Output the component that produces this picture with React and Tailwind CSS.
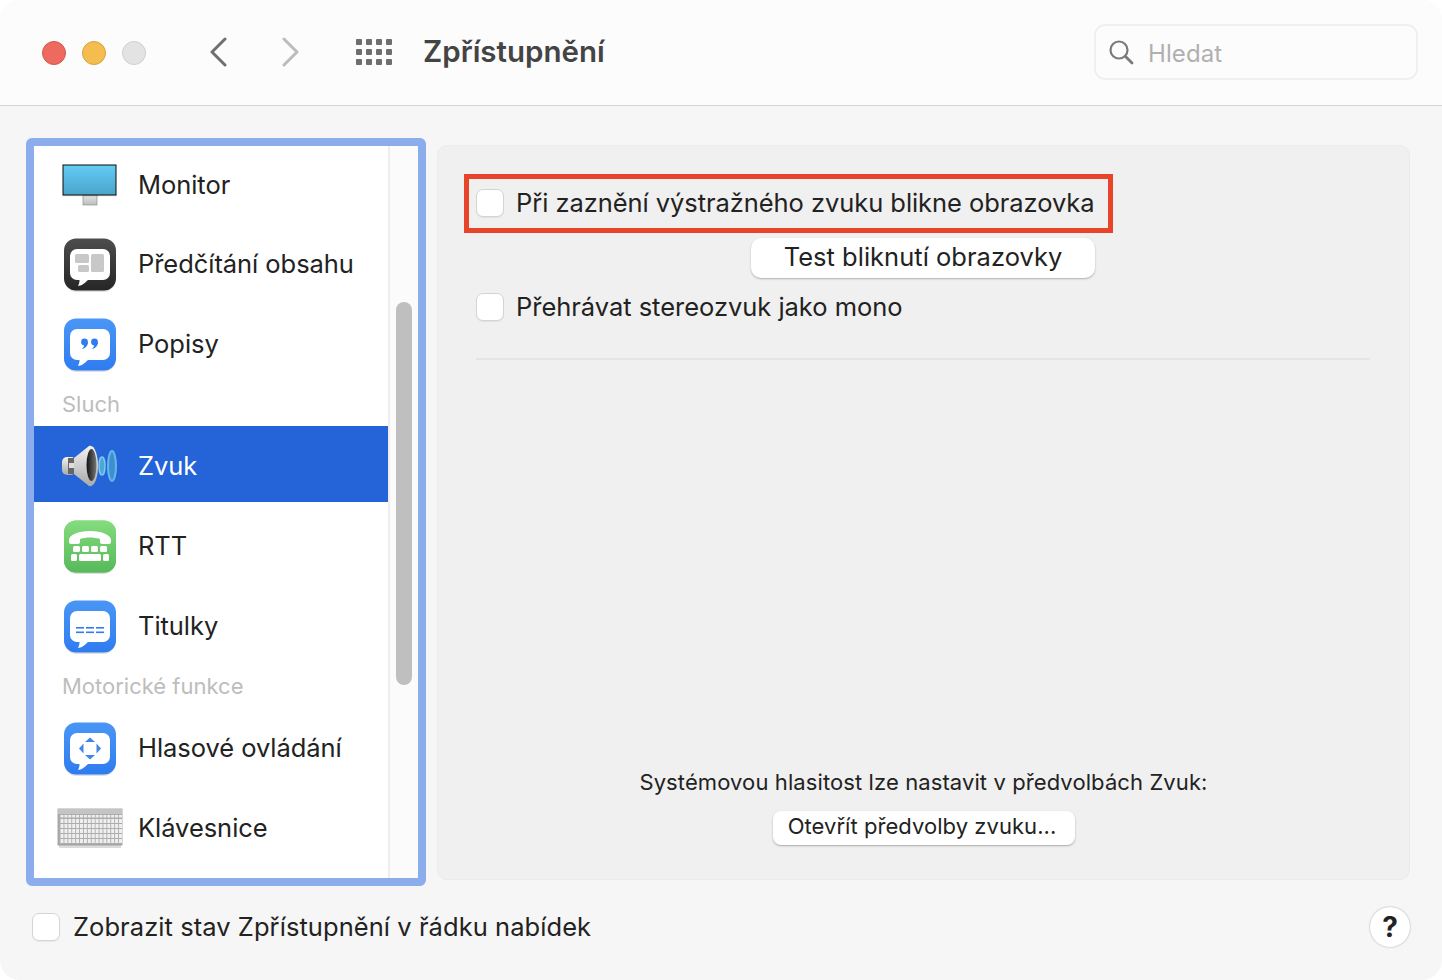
import React from "react";

const Bubble = ({ id, top, bottom, children }) => (
  <svg width="56" height="56" viewBox="0 0 56 56" className="block mt-[1px]">
    <defs>
      <linearGradient id={id} x1="0" y1="0" x2="0" y2="1">
        <stop offset="0" stopColor={top} />
        <stop offset="1" stopColor={bottom} />
      </linearGradient>
    </defs>
    <rect x="2.5" y="3" width="51" height="52" rx="12" fill="#000" opacity="0.12" />
    <rect x="2" y="1.5" width="52" height="52" rx="12" fill={`url(#${id})`} />
    <path d="M15 12h26a7 7 0 0 1 7 7v17a7 7 0 0 1-7 7H26c-3 3-7 6-10 6 1-2 1.600-4 1.500-6H15a7 7 0 0 1-7-7V19a7 7 0 0 1 7-7z" fill="#fff" />
    {children}
  </svg>
);

const MonitorIcon = () => (
  <svg width="56" height="46" viewBox="0 0 56 46" className="block mt-[4px]">
    <defs>
      <linearGradient id="scr" x1="0" y1="0" x2="0" y2="1">
        <stop offset="0" stopColor="#63cdf5" />
        <stop offset="1" stopColor="#4ba3c9" />
      </linearGradient>
      <linearGradient id="std" x1="0" y1="0" x2="0" y2="1">
        <stop offset="0" stopColor="#e4e4e4" />
        <stop offset="1" stopColor="#bdbdbd" />
      </linearGradient>
    </defs>
    <rect x="21" y="31" width="14" height="10" fill="url(#std)" stroke="#8f8f8f" strokeWidth="0.7" />
    <rect x="1" y="1" width="53" height="30" fill="url(#scr)" stroke="#0b0b0b" strokeWidth="1" />
    <rect x="1" y="31.300" width="54" height="1" fill="#000" opacity="0.15" />
  </svg>
);

const SpeakerIcon = () => (
  <svg width="58" height="44" viewBox="0 0 58 44" className="block">
    <defs>
      <linearGradient id="spk" x1="0" y1="0" x2="0" y2="1">
        <stop offset="0" stopColor="#f2f2f2" />
        <stop offset="1" stopColor="#a9a9a9" />
      </linearGradient>
      <linearGradient id="cone" x1="0" y1="0" x2="1" y2="0">
        <stop offset="0" stopColor="#111" />
        <stop offset="1" stopColor="#777" />
      </linearGradient>
    </defs>
    <rect x="1" y="13" width="14" height="18" rx="5" fill="url(#spk)" />
    <rect x="7" y="14" width="7" height="16" fill="#666" />
    <rect x="8" y="19" width="6" height="5" fill="#ddd" />
    <path d="M13 14 28 2c5-2 9 8 9 20s-4 22-9 20L13 30z" fill="url(#spk)" />
    <ellipse cx="30.500" cy="21" rx="5" ry="16" fill="url(#cone)" />
    <ellipse cx="41" cy="22" rx="3" ry="9" fill="#4fa6d9" stroke="#7cc8ee" strokeWidth="1.500" />
    <ellipse cx="51" cy="22" rx="4" ry="15" fill="#3e8fd2" stroke="#63b8e8" strokeWidth="2" />
  </svg>
);

const KeyRow = ({ y, h = 4 }) => (
  <g fill="#efefef">
    {Array.from({ length: 16 }, (_, i) => (
      <rect key={i} x={3.5 + i * 3.9} y={y} width="3" height={h} />
    ))}
  </g>
);

const KeyboardIcon = () => (
  <svg width="66" height="42" viewBox="0 0 66 42" className="block mt-[1px]">
    <rect x="2" y="36" width="62" height="4" fill="#000" opacity="0.14" />
    <rect x="1" y="1" width="64" height="36" fill="#adadad" stroke="#9a9a9a" strokeWidth="0.800" />
    <rect x="1" y="1" width="64" height="5" fill="#c4c4c4" />
    <KeyRow y={7} h={2.500} />
    <KeyRow y={11} />
    <KeyRow y={16} />
    <KeyRow y={21} />
    <KeyRow y={26} />
    <KeyRow y={31} />
  </svg>
);

const icons = {
  monitor: <MonitorIcon />,
  speech: (
    <Bubble id="g1" top="#4d4d4d" bottom="#262626">
      <rect x="13" y="17" width="14" height="9" rx="1.500" fill="#c8c8c8" />
      <rect x="16" y="28" width="11" height="7" rx="1.500" fill="#c8c8c8" />
      <rect x="29" y="17" width="13" height="18" rx="1.500" fill="#c8c8c8" />
    </Bubble>
  ),
  quote: (
    <Bubble id="g2" top="#4a96f6" bottom="#2f7cf0">
      <g fill="#2f7cf0">
        <circle cx="22.500" cy="25" r="3.400" />
        <path d="M25.900 25c0 4-2.500 6.500-6 7 1.500-1.300 2.300-2.800 2.400-4.500z" />
        <circle cx="32.500" cy="25" r="3.400" />
        <path d="M35.900 25c0 4-2.500 6.500-6 7 1.500-1.300 2.300-2.800 2.400-4.500z" />
      </g>
    </Bubble>
  ),
  sound: <SpeakerIcon />,
  rtt: (
    <Bubble id="g3" top="#84dc7e" bottom="#57b95a">
      <rect x="2" y="1.500" width="52" height="52" rx="12" fill="url(#g3)" />
      <path d="M7 21c0-5 9-9 21-9s21 4 21 9v2c0 1-1 2-2 2h-7c-1 0-2-1-2-2v-3c-3-1-7-1.500-10-1.500S21 19 18 20v3c0 1-1 2-2 2H9c-1 0-2-1-2-2z" fill="#fff" />
      <g fill="#fff">
        <rect x="11" y="27" width="7" height="6" rx="1.500" />
        <rect x="20" y="27" width="7" height="6" rx="1.500" />
        <rect x="29" y="27" width="7" height="6" rx="1.500" />
        <rect x="38" y="27" width="7" height="6" rx="1.500" />
        <rect x="9" y="35" width="6" height="7" rx="1.500" />
        <rect x="17" y="35" width="22" height="7" rx="1.500" />
        <rect x="41" y="35" width="6" height="7" rx="1.500" />
      </g>
    </Bubble>
  ),
  captions: (
    <Bubble id="g4" top="#4a96f6" bottom="#2f7cf0">
      <g fill="#2f7cf0">
        <rect x="14" y="28" width="8" height="1.600" />
        <rect x="24" y="28" width="8" height="1.600" />
        <rect x="34" y="28" width="8" height="1.600" />
        <rect x="14" y="32.500" width="8" height="1.600" />
        <rect x="24" y="32.500" width="8" height="1.600" />
        <rect x="34" y="32.500" width="8" height="1.600" />
      </g>
    </Bubble>
  ),
  voice: (
    <Bubble id="g5" top="#4a96f6" bottom="#2f7cf0">
      <g fill="#3f86e8">
        <path d="M28 16.500 33 21H23z" />
        <path d="M28 38.500 33 34H23z" />
        <path d="M17 27.500 21.500 22.500V32.500z" />
        <path d="M39 27.500 34.500 22.500V32.500z" />
      </g>
    </Bubble>
  ),
  keyboard: <KeyboardIcon />,
};

const Row = ({ icon, label, selected, height = "h-[80px]" }) => (
  <div
    className={`flex items-center ${selected ? "h-[76px] mb-[4px] pt-[4px] bg-[#2463d8] text-white" : `${height} text-[#222222]`}`}
  >
    <div className="w-[112px] shrink-0 flex justify-center">{icon}</div>
    <span className="-ml-[8px] text-[25.500px] leading-none tracking-[-0.05px]">{label}</span>
  </div>
);

const Section = ({ label }) => (
  <div className="h-[42px] pl-[28px] pb-[2px] flex items-center text-[22px] text-[#bdbdbd]">{label}</div>
);

const Check = () => (
  <span className="block w-[28px] h-[28px] shrink-0 rounded-[7px] bg-white border border-[#d4d4d4] shadow-[0_1px_1px_rgba(0,0,0,0.06)]" />
);

export default function App() {
  return (
    <div className="w-[1442px] h-[980px] bg-white overflow-hidden font-['Inter','Noto_Sans',sans-serif]">
      <div className="w-full h-full rounded-[20px] overflow-hidden bg-[#f6f6f6] flex flex-col">
        <header className="h-[106px] shrink-0 bg-[#fcfcfc] border-b border-[#d6d6d6] flex items-center pl-[42px] pr-[24px]">
          <div className="flex gap-[16px] items-center">
            <span className="block w-[24px] h-[24px] rounded-full bg-[#ee6a5f] border border-[#d0574d]" />
            <span className="block w-[24px] h-[24px] rounded-full bg-[#f5bd4f] border border-[#d8a23c]" />
            <span className="block w-[24px] h-[24px] rounded-full bg-[#e3e3e3] border border-[#cfcfcf]" />
          </div>
          <svg width="20" height="30" viewBox="0 0 20 30" className="ml-[63px] -mt-[2px]" fill="none" stroke="#6f6f6f" strokeWidth="3" strokeLinecap="round" strokeLinejoin="round">
            <path d="M16 2 3 15l13 13" />
          </svg>
          <svg width="20" height="30" viewBox="0 0 20 30" className="ml-[51px] -mt-[2px]" fill="none" stroke="#bcbcbc" strokeWidth="3" strokeLinecap="round" strokeLinejoin="round">
            <path d="M4 2l13 13L4 28" />
          </svg>
          <svg width="36" height="26" viewBox="0 0 36 26" className="ml-[56px] -mt-[2px]" fill="#6e6e6e">
            {[0, 10, 20].map((y) =>
              [0, 10, 20, 30].map((x) => <rect key={`${x}-${y}`} x={x} y={y} width="6" height="6" rx="1" />)
            )}
          </svg>
          <h1 className="ml-[31px] -mt-[2px] text-[29.500px] font-semibold text-[#444444] leading-none">Zpřístupnění</h1>
          <div className="ml-auto w-[324px] h-[56px] rounded-[11px] border-2 border-[#f0f0f0] bg-[#fcfcfc] flex items-center pl-[13px] -mt-[2px]">
            <svg width="26" height="26" viewBox="0 0 26 26" className="-ml-[1px]" fill="none" stroke="#7a7a7a" strokeWidth="2.200" strokeLinecap="round">
              <circle cx="11" cy="11" r="8.500" />
              <path d="M17.500 17.500 24 24" strokeWidth="2.800" />
            </svg>
            <span className="ml-[14px] mt-[4px] text-[24px] text-[#b0b0b0] leading-none tracking-[0.1px]">Hledat</span>
          </div>
        </header>

        <div className="flex-1 flex flex-col px-[26px] pt-[32px]">
          <div className="flex gap-[11px] items-start">
            <aside className="w-[400px] h-[748px] shrink-0 rounded-[6px] border-[8px] border-[#8badeb] bg-white flex overflow-hidden">
              <div className="w-[354px] shrink-0">
                <Row icon={icons.monitor} label="Monitor" height="h-[78px]" />
                <Row icon={icons.speech} label="Předčítání obsahu" />
                <Row icon={icons.quote} label="Popisy" />
                <Section label="Sluch" />
                <Row icon={icons.sound} label="Zvuk" selected />
                <Row icon={icons.rtt} label="RTT" />
                <Row icon={icons.captions} label="Titulky" />
                <Section label="Motorické funkce" />
                <Row icon={icons.voice} label="Hlasové ovládání" />
                <Row icon={icons.keyboard} label="Klávesnice" />
              </div>
              <div className="flex-1 border-l-2 border-[#eeeeee] bg-[#fbfbfb] pt-[156px] pl-[6px]">
                <div className="w-[16px] h-[383px] rounded-full bg-[#bfbfbf]" />
              </div>
            </aside>

            <main className="mt-[7px] w-[973px] h-[735px] rounded-[10px] bg-[#f0f0f0] border border-[#ebebeb] flex flex-col text-[#222222]">
              <div className="ml-[26px] mt-[28px] w-[649px] h-[59px] border-[5px] border-[#e8442a] flex items-center pl-[7px] pb-[1px]">
                <Check />
                <span className="ml-[12px] text-[25.500px] leading-none tracking-[-0.06px] whitespace-nowrap">Při zaznění výstražného zvuku blikne obrazovka</span>
              </div>
              <button className="self-start ml-[313px] mt-[5px] w-[344px] h-[40px] rounded-[10px] bg-white shadow-[0_1px_2px_rgba(0,0,0,0.28)] text-[25.500px] leading-none tracking-[0.02px] text-[#222222] flex items-center justify-center pb-[2px]">
                Test bliknutí obrazovky
              </button>
              <div className="ml-[38px] mt-[15px] flex items-center">
                <Check />
                <span className="ml-[12px] text-[25.500px] leading-none tracking-[-0.03px] whitespace-nowrap">Přehrávat stereozvuk jako mono</span>
              </div>
              <div className="ml-[38px] mr-[39px] mt-[37px] h-[2px] bg-[#e5e5e5]" />
              <div className="mt-auto pb-[34px] flex flex-col items-center">
                <p className="text-[22px] leading-none tracking-[0.1px] whitespace-nowrap">Systémovou hlasitost lze nastavit v předvolbách Zvuk:</p>
                <button className="mt-[18px] w-[302px] h-[34px] rounded-[8px] bg-white shadow-[0_1px_2px_rgba(0,0,0,0.3)] text-[22px] leading-none tracking-[0.05px] text-[#222222] flex items-center justify-center pb-[4px] pr-[3px]">
                  Otevřít předvolby zvuku...
                </button>
              </div>
            </main>
          </div>

          <footer className="flex items-center mt-[21px] pl-[6px] text-[#222222]">
            <Check />
            <span className="ml-[13px] text-[25.500px] leading-none tracking-[0.06px]">Zobrazit stav Zpřístupnění v řádku nabídek</span>
            <span className="ml-auto w-[40px] h-[40px] rounded-full bg-white shadow-[0_0_2px_rgba(0,0,0,0.35)] flex items-center justify-center text-[28px] font-bold leading-none text-[#222222] mr-[6px]">?</span>
          </footer>
        </div>
      </div>
    </div>
  );
}
